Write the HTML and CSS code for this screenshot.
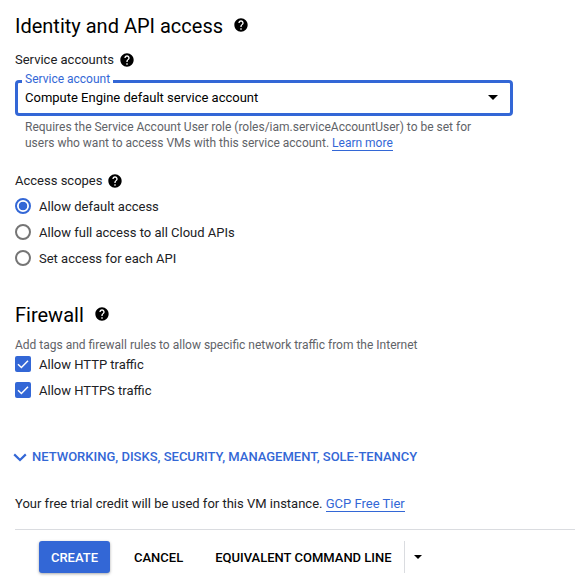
FILE: index.html
```html
<!DOCTYPE html>
<html lang="en">
<head>
<meta charset="utf-8">
<title>Identity and API access</title>
<link rel="stylesheet" href="styles.css">
</head>
<body>
<main class="page">
  <h2 class="heading heading-identity">Identity and API access
    <svg class="help help-lg" viewBox="0 0 24 24"><path d="M12 2C6.48 2 2 6.48 2 12s4.48 10 10 10 10-4.48 10-10S17.52 2 12 2zm1 17h-2v-2h2v2zm2.07-7.75l-.9.92C13.45 12.9 13 13.5 13 15h-2v-.5c0-1.1.45-2.1 1.17-2.83l1.24-1.26c.37-.36.59-.86.59-1.41 0-1.1-.9-2-2-2s-2 .9-2 2H8c0-2.21 1.79-4 4-4s4 1.79 4 4c0 .88-.36 1.68-.93 2.25z"/></svg>
  </h2>
  <div class="label label-accounts">Service accounts
    <svg class="help" viewBox="0 0 24 24"><path d="M12 2C6.48 2 2 6.48 2 12s4.48 10 10 10 10-4.48 10-10S17.52 2 12 2zm1 17h-2v-2h2v2zm2.07-7.75l-.9.92C13.45 12.9 13 13.5 13 15h-2v-.5c0-1.1.45-2.1 1.17-2.83l1.24-1.26c.37-.36.59-.86.59-1.41 0-1.1-.9-2-2-2s-2 .9-2 2H8c0-2.21 1.79-4 4-4s4 1.79 4 4c0 .88-.36 1.68-.93 2.25z"/></svg>
  </div>
  <div class="select">
    <span class="select-label">Service account</span>
    <span class="select-value">Compute Engine default service account</span>
    <span class="caret"></span>
  </div>
  <p class="hint">Requires the Service Account User role (roles/iam.serviceAccountUser) to be set for<br>users who want to access VMs with this service account. <a class="link" href="#">Learn more</a></p>
  <div class="label label-scopes">Access scopes
    <svg class="help" viewBox="0 0 24 24"><path d="M12 2C6.48 2 2 6.48 2 12s4.48 10 10 10 10-4.48 10-10S17.52 2 12 2zm1 17h-2v-2h2v2zm2.07-7.75l-.9.92C13.45 12.9 13 13.5 13 15h-2v-.5c0-1.1.45-2.1 1.17-2.83l1.24-1.26c.37-.36.59-.86.59-1.41 0-1.1-.9-2-2-2s-2 .9-2 2H8c0-2.21 1.79-4 4-4s4 1.79 4 4c0 .88-.36 1.68-.93 2.25z"/></svg>
  </div>
  <div class="options">
    <div class="option"><span class="radio radio-on"></span>Allow default access</div>
    <div class="option"><span class="radio"></span>Allow full access to all Cloud APIs</div>
    <div class="option"><span class="radio"></span>Set access for each API</div>
  </div>
  <h2 class="heading heading-firewall">Firewall
    <svg class="help help-lg" viewBox="0 0 24 24"><path d="M12 2C6.48 2 2 6.48 2 12s4.48 10 10 10 10-4.48 10-10S17.52 2 12 2zm1 17h-2v-2h2v2zm2.07-7.75l-.9.92C13.45 12.9 13 13.5 13 15h-2v-.5c0-1.1.45-2.1 1.17-2.83l1.24-1.26c.37-.36.59-.86.59-1.41 0-1.1-.9-2-2-2s-2 .9-2 2H8c0-2.21 1.79-4 4-4s4 1.79 4 4c0 .88-.36 1.68-.93 2.25z"/></svg>
  </h2>
  <p class="hint hint-firewall">Add tags and firewall rules to allow specific network traffic from the Internet</p>
  <div class="options">
    <div class="option"><span class="check"><svg viewBox="0 0 16 16"><path d="M3 8.2l3.4 3.3L13 4.8" fill="none" stroke="#fff" stroke-width="1.5"/></svg></span>Allow HTTP traffic</div>
    <div class="option"><span class="check"><svg viewBox="0 0 16 16"><path d="M3 8.2l3.4 3.3L13 4.8" fill="none" stroke="#fff" stroke-width="1.5"/></svg></span>Allow HTTPS traffic</div>
  </div>
  <div class="expander">
    <svg class="chevron" viewBox="0 0 14 9"><path d="M1.2 1.4L7 7l5.8-5.6" fill="none" stroke="#3367d6" stroke-width="2.2"/></svg>
    NETWORKING, DISKS, SECURITY, MANAGEMENT, SOLE-TENANCY
  </div>
  <p class="trial">Your free trial credit will be used for this VM instance. <a class="link" href="#">GCP Free Tier</a></p>
  <div class="actions">
    <button class="btn btn-primary">CREATE</button>
    <button class="btn btn-cancel">CANCEL</button>
    <button class="btn btn-command">EQUIVALENT COMMAND LINE</button>
    <span class="split"><span class="caret caret-sm"></span></span>
  </div>
</main>
</body>
</html>
```
FILE: styles.css
```css
* { box-sizing: border-box; }
html, body { margin: 0; padding: 0; background: #fff; }
body { width: 575px; height: 581px; overflow: hidden; font-family: Roboto, "Liberation Sans", sans-serif; color: #202124; }
.page { padding: 13px 0 0 15px; }
.heading { margin: 0; font-weight: 400; font-size: 20px; line-height: 26px; color: #000; display: flex; align-items: center; }
.help { width: 16px; height: 16px; margin-left: 5px; fill: #000; flex: none; }
.help-lg { margin-left: 10px; position: relative; top: -1px; }
.label { font-size: 13px; line-height: 18px; color: #202124; display: flex; align-items: center; }
.label-accounts { margin-top: 12px; }
.select { position: relative; width: 498px; height: 36px; margin-top: 11px; border: 3px solid #3367d6; border-radius: 4px; display: flex; align-items: center; padding: 0 7px 2px; font-size: 13px; color: #000; }
.select-label { position: absolute; left: 4px; top: -11px; padding: 0 3px; background: #fff; color: #3367d6; font-size: 12px; line-height: 14px; }
.select-value { flex: 1; }
.caret { width: 0; height: 0; border-left: 5px solid transparent; border-right: 5px solid transparent; border-top: 5px solid #000; margin-right: 5px; }
.hint { margin: 3px 0 0 10px; font-size: 12px; line-height: 16px; color: #5f6368; }
.link { color: #3367d6; text-decoration: none; border-bottom: 1px solid #3367d6; }
.label-scopes { margin-top: 21px; }
.options { display: flex; flex-direction: column; }
.label-scopes + .options { margin-top: 3px; }
.option { display: flex; align-items: center; height: 26px; font-size: 13px; color: #202124; }
.radio { width: 16px; height: 16px; border: 2px solid #757575; border-radius: 50%; margin-right: 8px; flex: none; }
.radio-on { border-color: #3367d6; background: radial-gradient(circle, #3367d6 0 4px, #fff 4.6px); }
.check { width: 16px; height: 16px; background: #3367d6; border-radius: 2px; margin-right: 8px; flex: none; display: flex; }
.check svg { width: 16px; height: 16px; }
.heading-firewall { margin-top: 31px; }
.hint-firewall { margin: 9px 0 0; }
.hint-firewall + .options { margin-top: -2px; }
.expander { margin-top: 46px; margin-left: -2px; display: flex; align-items: center; font-size: 13px; font-weight: 500; color: #3367d6; line-height: 16px; }
.chevron { width: 14px; height: 9px; margin-right: 5px; }
.trial { margin: 30px 0 0; font-size: 13px; line-height: 18px; color: #202124; }
.actions { margin-top: 16px; border-top: 1px solid #dadce0; padding: 11px 0 0 24px; display: flex; align-items: center; }
.btn { border: 0; background: none; font: 500 13px Roboto, "Liberation Sans", sans-serif; height: 32px; padding: 0; color: #000; }
.btn-primary { width: 71px; background: #3367d6; color: #fff; border-radius: 3px; box-shadow: 0 1px 3px rgba(0,0,0,.35); }
.btn-cancel { margin-left: 24px; }
.btn-command { margin-left: 32px; }
.split { height: 32px; margin-left: 12px; border-left: 1px solid #dadce0; padding-left: 9px; display: flex; align-items: center; }
.caret-sm { border-left-width: 4px; border-right-width: 4px; border-top-width: 4px; margin: 0; }
```
